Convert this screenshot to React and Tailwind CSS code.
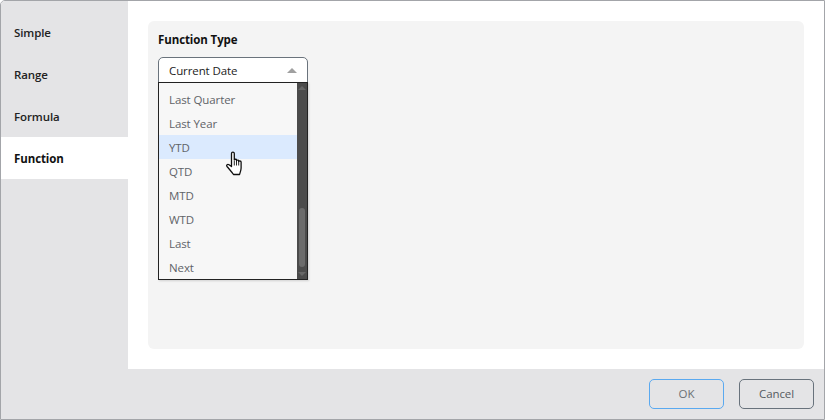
import React from 'react';

const font = { fontFamily: '"Open Sans", "Noto Sans", sans-serif' };

const tabs = ['Simple', 'Range', 'Formula', 'Function'];
const items = ['Last Quarter', 'Last Year', 'YTD', 'QTD', 'MTD', 'WTD', 'Last', 'Next'];

const HandCursor = () => (
  <svg className="absolute left-[66px] top-[68px]" width="20" height="26" viewBox="0 0 20 26">
    <path
      d="M6.500 2.500c0-1.800 2.800-1.800 2.800 0V9c0-1 2.200-1 2.200 0v.8c0-1 2.200-1 2.200 0v.8c0-1 2.400-1 2.400.4v6c0 2.500-.8 4-1.600 6.500H8.500c-1.500-2.200-3-3.800-6.500-8-1.100-1.400.6-2.800 2-1.800l2.500 1.800z"
      fill="#fff"
      stroke="#111"
      strokeWidth="1.300"
      strokeLinejoin="round"
    />
    <path d="M9.300 10v4.500M11.500 10v4.500M13.700 10.500v4" stroke="#111" strokeWidth="0.900" fill="none" />
  </svg>
);

const App = () => {
  return (
    <div
      style={font}
      className="w-[825px] h-[420px] flex flex-col bg-white border border-[#a3a5a9] rounded-tl-[5px] overflow-hidden text-[11.5px] tracking-[-0.1px]"
    >
      <div className="flex flex-1 min-h-0">
        <div className="w-[127px] shrink-0 bg-[#e4e4e6] pt-[10px]">
          {tabs.map((t) => (
            <div
              key={t}
              className={
                t === 'Function'
                  ? 'h-[42px] flex items-center pl-[13px] pt-[2px] bg-white font-bold text-[#111]'
                  : 'h-[42px] flex items-center pl-[13px] pt-[2px] font-semibold text-[#222]'
              }
            >
              {t}
            </div>
          ))}
        </div>

        <div className="flex-1 pt-5 pl-5 pr-5 pb-5">
          <div className="h-full bg-[#f4f4f4] rounded-[6px] px-[10px] pt-[10px]">
            <div className="h-[18px] flex items-center font-bold text-[#111]">Function Type</div>

            <div className="relative w-[150px] mt-2">
              <div className="h-[26px] bg-white border border-[#6a737c] rounded-t-[5px] flex items-center justify-between pl-[10px] pr-[10px] text-[#222]">
                <span className="pt-[2px]">Current Date</span>
                <span className="w-0 h-0 border-l-[5px] border-r-[5px] border-b-[5px] border-l-transparent border-r-transparent border-b-[#a0a0a0]" />
              </div>
              <div className="relative -mt-px h-[198px] bg-[#f7f7f7] border border-[#222] flex shadow-[1px_1px_2px_rgba(0,0,0,0.15)]">
                <div className="flex-1 pt-1 text-[#5f6368]">
                  {items.map((item) => (
                    <div
                      key={item}
                      className={
                        item === 'YTD'
                          ? 'h-6 flex items-center pl-[10px] pt-[2px] bg-[#dbeafe]'
                          : 'h-6 flex items-center pl-[10px] pt-[2px]'
                      }
                    >
                      {item}
                    </div>
                  ))}
                </div>
                <div className="w-[10px] bg-[#4b4b4b] flex flex-col items-center justify-between pt-[3px] pb-[3px]">
                  <span className="w-0 h-0 border-l-[4px] border-r-[4px] border-b-[4px] border-l-transparent border-r-transparent border-b-[#666]" />
                  <div className="mt-auto flex flex-col items-center gap-[5px]">
                    <div className="w-[6px] h-[59px] rounded-[3px] bg-[#6b6b6b]" />
                    <span className="w-0 h-0 border-l-[4px] border-r-[4px] border-t-[4px] border-l-transparent border-r-transparent border-t-[#666]" />
                  </div>
                </div>
                <HandCursor />
              </div>
            </div>
          </div>
        </div>
      </div>

      <div className="h-[50px] shrink-0 bg-[#e4e4e6] flex items-center justify-end gap-[15px] pr-[10px] pb-px">
        <button className="w-[75px] h-[30px] rounded-[5px] border border-[#5aa9f0] text-[#6b7075] flex items-center justify-center">
          OK
        </button>
        <button className="w-[75px] h-[30px] rounded-[5px] border border-[#68727c] text-[#555b61] flex items-center justify-center">
          Cancel
        </button>
      </div>
    </div>
  );
};

export default App;
